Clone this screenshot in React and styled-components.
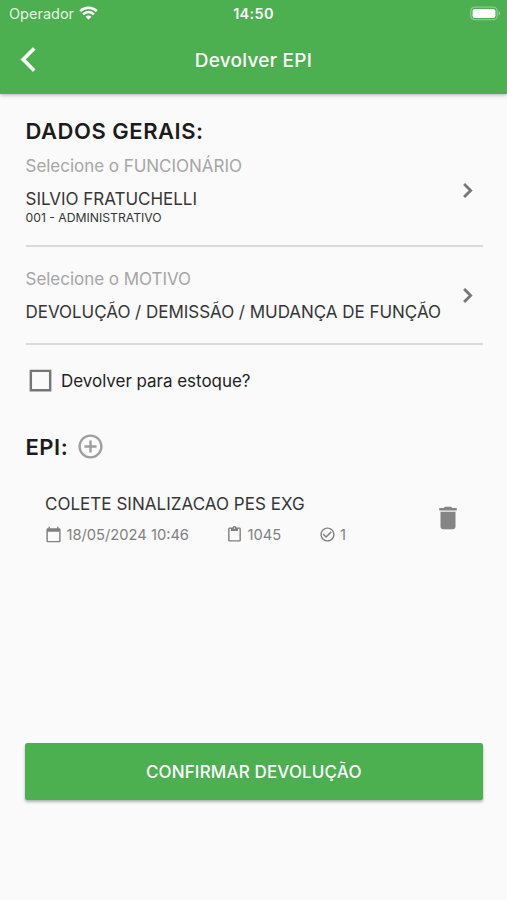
import React, { useState } from "react";
import styled, { createGlobalStyle } from "styled-components";

const item = {
  name: "COLETE SINALIZACAO PES EXG",
  date: "18/05/2024 10:46",
  code: "1045",
  amount: "1",
};

const icons = {
  back: "M11.67 3.87L9.9 2.1 0 12l9.9 9.9 1.77-1.77L3.54 12z",
  right: "M10 6L8.59 7.41 13.17 12l-4.58 4.59L10 18l6-6z",
  box: "M3 3h18v18H3V3zm2 2v14h14V5H5z",
  boxChecked:
    "M19 3H5c-1.11 0-2 .9-2 2v14c0 1.1.89 2 2 2h14c1.11 0 2-.9 2-2V5c0-1.1-.89-2-2-2zm-9 14l-5-5 1.41-1.41L10 14.17l7.59-7.59L19 8l-9 9z",
  add: "M13 7h-2v4H7v2h4v4h2v-4h4v-2h-4V7zm-1-5C6.48 2 2 6.48 2 12s4.48 10 10 10 10-4.48 10-10S17.52 2 12 2zm0 18c-4.41 0-8-3.59-8-8s3.59-8 8-8 8 3.59 8 8-3.59 8-8 8z",
  calendar:
    "M20 3h-1V1h-2v2H7V1H5v2H4c-1.1 0-2 .9-2 2v16c0 1.1.9 2 2 2h16c1.1 0 2-.9 2-2V5c0-1.1-.9-2-2-2zm0 18H4V8h16v13z",
  paste:
    "M19 2h-4.18C14.4.84 13.3 0 12 0c-1.3 0-2.4.84-2.82 2H5c-1.1 0-2 .9-2 2v16c0 1.1.9 2 2 2h14c1.1 0 2-.9 2-2V4c0-1.1-.9-2-2-2zm-7 0c.55 0 1 .45 1 1s-.45 1-1 1-1-.45-1-1 .45-1 1-1zm7 18H5V4h2v3h10V4h2v16z",
  check:
    "M16.59 7.58L10 14.17l-3.59-3.58L5 12l5 5 8-8zM12 2C6.48 2 2 6.48 2 12s4.48 10 10 10 10-4.48 10-10S17.52 2 12 2zm0 18c-4.42 0-8-3.58-8-8s3.58-8 8-8 8 3.58 8 8-3.58 8-8 8z",
  trash: "M6 19c0 1.1.9 2 2 2h8c1.1 0 2-.9 2-2V7H6v12zM19 4h-3.5l-1-1h-5l-1 1H5v2h14V4z",
};

const Icon = ({ name, size, bold }) => (
  <Svg viewBox="0 0 24 24" $size={size} $bold={bold}>
    <path d={icons[name]} />
  </Svg>
);

const Wifi = () => (
  <WifiIcon viewBox="0 0 19 14">
    <path d="M1.2 5.1a11.9 11.9 0 0 1 16.6 0" />
    <path d="M4.1 8.3a7.7 7.7 0 0 1 10.8 0" />
    <path className="dot" d="M9.5 13.8L6.5 10.8a4.2 4.2 0 0 1 6 0z" />
  </WifiIcon>
);

const Battery = () => (
  <BatteryIcon viewBox="0 0 31 15">
    <rect className="shell" x="0.8" y="1.1" width="26.4" height="12.6" rx="4" />
    <rect x="2.6" y="2.9" width="22.8" height="9" rx="2.2" />
    <path className="cap" d="M28.6 5v4.6c2-.8 2-3.8 0-4.6z" />
  </BatteryIcon>
);

const App = () => {
  const [stock, setStock] = useState(false);

  return (
    <Page>
      <GlobalStyle />
      <Header>
        <StatusBar>
          <Carrier>
            Operador <Wifi />
          </Carrier>
          <Clock>14:50</Clock>
          <Battery />
        </StatusBar>
        <NavBar>
          <Icon name="back" size={29} bold={0.6} />
          <Title>Devolver EPI</Title>
        </NavBar>
      </Header>
      <Content>
        <Heading>DADOS GERAIS:</Heading>
        <Field $height={102} $arrow={23}>
          <div>
            <Label>Selecione o FUNCIONÁRIO</Label>
            <Value>SILVIO FRATUCHELLI</Value>
            <Small>001 - ADMINISTRATIVO</Small>
          </div>
          <Icon name="right" size={29} bold={0.4} />
        </Field>
        <Field $height={87} $top={11} $arrow={15}>
          <div>
            <Label>Selecione o MOTIVO</Label>
            <Value>DEVOLUÇÃO / DEMISSÃO / MUDANÇA DE FUNÇÃO</Value>
          </div>
          <Icon name="right" size={29} bold={0.4} />
        </Field>
        <Check onClick={() => setStock(!stock)}>
          <Icon name={stock ? "boxChecked" : "box"} size={29} />
          <span>Devolver para estoque?</span>
        </Check>
        <EpiRow>
          <Heading>EPI:</Heading>
          <Icon name="add" size={29} />
        </EpiRow>
        <Item>
          <div>
            <ItemName>{item.name}</ItemName>
            <Details>
              <Detail $width={181}>
                <Icon name="calendar" size={17} />
                {item.date}
              </Detail>
              <Detail $width={92.5}>
                <Icon name="paste" size={17} />
                {item.code}
              </Detail>
              <Detail>
                <Icon name="check" size={17} />
                {item.amount}
              </Detail>
            </Details>
          </div>
          <Icon name="trash" size={30} />
        </Item>
        <Confirm>CONFIRMAR DEVOLUÇÃO</Confirm>
      </Content>
    </Page>
  );
};

//Styles
const GlobalStyle = createGlobalStyle`
  * {
    box-sizing: border-box;
  }
  body {
    margin: 0;
    background: #fafafa;
  }
`;

const Svg = styled.svg`
  display: block;
  flex: none;
  overflow: visible;
  width: ${(p) => p.$size}px;
  height: ${(p) => p.$size}px;
  fill: currentColor;
  stroke: currentColor;
  stroke-width: ${(p) => p.$bold || 0};
`;

const WifiIcon = styled.svg`
  width: 19px;
  height: 14px;
  margin-top: -1px;
  fill: none;
  stroke: #fff;
  stroke-width: 2.5;
  .dot {
    fill: #fff;
    stroke: none;
  }
`;

const BatteryIcon = styled.svg`
  width: 31px;
  height: 15px;
  justify-self: end;
  fill: #fff;
  .shell {
    fill: none;
    stroke: rgba(255, 255, 255, 0.35);
    stroke-width: 1.3;
  }
  .cap {
    opacity: 0.4;
  }
`;

const Page = styled.div`
  display: flex;
  flex-direction: column;
  height: 900px;
  background: #fafafa;
  color: #363636;
  font-family: Inter, "Liberation Sans", sans-serif;
  white-space: nowrap;
`;

const Header = styled.header`
  flex: none;
  height: 94px;
  background: #4caf50;
  color: #fff;
  box-shadow: 0 1px 4px rgba(0, 0, 0, 0.3);
`;

const StatusBar = styled.div`
  display: grid;
  grid-template-columns: 1fr auto 1fr;
  align-items: center;
  height: 27px;
  padding: 0 6px 0 9px;
`;

const Carrier = styled.div`
  display: flex;
  align-items: center;
  gap: 5px;
  font-size: 14.5px;
  color: rgba(255, 255, 255, 0.88);
`;

const Clock = styled.div`
  margin-right: 3px;
  font-size: 14.5px;
  font-weight: 600;
  letter-spacing: 0.3px;
`;

const NavBar = styled.div`
  display: grid;
  grid-template-columns: 1fr auto 1fr;
  align-items: center;
  height: 66px;
  padding: 0 20.5px;
  > svg {
    margin-top: -1px;
  }
`;

const Title = styled.h1`
  margin: 0;
  font-size: 19px;
  font-weight: 500;
  letter-spacing: 0.25px;
`;

const Content = styled.main`
  display: flex;
  flex-direction: column;
  padding: 24px 24.5px 0 25.5px;
`;

const Heading = styled.h2`
  margin: 0;
  font-size: 22px;
  line-height: 27px;
  font-weight: 600;
  letter-spacing: 0.52px;
  color: #1c1c1c;
`;

const Field = styled.div`
  display: flex;
  justify-content: space-between;
  height: ${(p) => p.$height}px;
  margin-top: ${(p) => p.$top || 0}px;
  padding-top: 8px;
  border-bottom: 2px solid #dadada;
  > svg {
    margin-top: ${(p) => p.$arrow}px;
    margin-right: 1px;
    color: #757575;
  }
`;

const Label = styled.div`
  font-size: 17px;
  line-height: 26px;
  letter-spacing: -0.03px;
  color: #a6a6a6;
`;

const Value = styled.div`
  margin-top: 7px;
  font-size: 17px;
  line-height: 26px;
  letter-spacing: -0.03px;
`;

const Small = styled.div`
  font-size: 12.2px;
  line-height: 12px;
`;

const Check = styled.div`
  display: flex;
  align-items: center;
  gap: 6.5px;
  height: 36px;
  margin-top: 18px;
  font-size: 17px;
  letter-spacing: -0.03px;
  color: #1f1f1f;
  > svg {
    margin-top: -1px;
    color: #757575;
  }
`;

const EpiRow = styled.div`
  display: flex;
  align-items: center;
  gap: 7.5px;
  height: 36px;
  margin-top: 30px;
  > svg {
    margin-top: -1px;
    color: #9e9e9e;
  }
`;

const Item = styled.div`
  display: flex;
  align-items: center;
  justify-content: space-between;
  height: 62px;
  margin-top: 23px;
  padding: 0 20px 0 19.5px;
  > svg {
    margin-top: -3px;
    color: #858585;
  }
`;

const ItemName = styled.div`
  font-size: 17px;
  line-height: 26px;
  letter-spacing: 0.03px;
`;

const Details = styled.div`
  display: flex;
  margin-top: 5px;
`;

const Detail = styled.div`
  display: flex;
  align-items: center;
  gap: 4.5px;
  width: ${(p) => (p.$width ? p.$width + "px" : "auto")};
  height: 26px;
  font-size: 14.7px;
  color: #808080;
`;

const Confirm = styled.button`
  height: 57px;
  margin: 193px 0 0 -0.5px;
  border: none;
  border-radius: 2.5px;
  background: #4caf50;
  color: #fff;
  font-family: inherit;
  font-size: 17px;
  font-weight: 500;
  letter-spacing: 0.15px;
  box-shadow: 0 2px 3px rgba(0, 0, 0, 0.3);
`;

export default App;
